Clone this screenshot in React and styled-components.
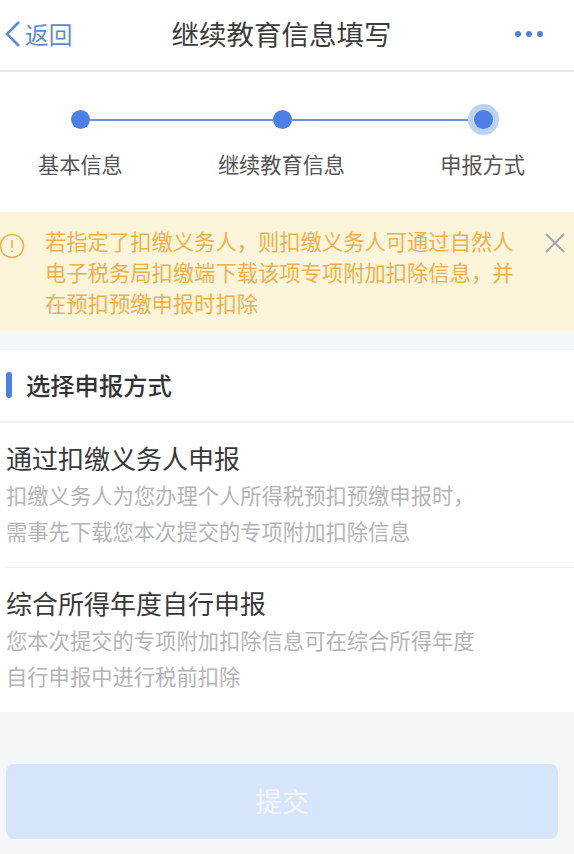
import React from "react";
import styled, { createGlobalStyle } from "styled-components";

const GlobalStyle = createGlobalStyle`
  html, body {
    margin: 0;
    padding: 0;
    background: #f4f6fa;
  }
  body {
    font-family: "Noto Sans CJK SC", "Liberation Sans", sans-serif;
  }
`;

const Page = styled.div`
  width: 574px;
  height: 854px;
  overflow: hidden;
  display: flex;
  flex-direction: column;
  background: #f4f6fa;
`;

const Header = styled.header`
  height: 70px;
  box-sizing: content-box;
  display: flex;
  align-items: center;
  justify-content: space-between;
  padding: 0 31px 0 4px;
  background: #fff;
  border-bottom: 2px solid #e9e9eb;
`;

const Back = styled.div`
  width: 136px;
  display: flex;
  align-items: center;
  gap: 3px;
  margin-bottom: 2px;
  color: #5b8bd8;
  font-size: 23.7px;
`;

const Title = styled.h1`
  margin: 0 0 4px;
  font-size: 27.5px;
  font-weight: 400;
  color: #3c3c3c;
`;

const More = styled.div`
  width: 120px;
  display: flex;
  justify-content: flex-end;
  gap: 5px;
  margin-bottom: 2px;
`;

const MoreDot = styled.span`
  width: 6px;
  height: 6px;
  border-radius: 50%;
  background: #4f7fdc;
`;

const Steps = styled.section`
  height: 140px;
  background: #fff;
  display: flex;
  flex-direction: column;
`;

const Track = styled.div`
  height: 37px;
  margin: 29px 81px 0 71px;
  display: flex;
  align-items: center;
`;

const Dot = styled.span`
  flex: none;
  width: 19px;
  height: 19px;
  border-radius: 50%;
  background: #4d7fe6;
  ${(p) => p.$active && "box-shadow: 0 0 0 6px #bcd2f2;"}
`;

const Line = styled.span`
  flex: 1;
  height: 2px;
  background: #6b94da;
`;

const Labels = styled.div`
  margin-top: 11px;
  padding: 0 49px 0 38px;
  display: flex;
  justify-content: space-between;
`;

const StepLabel = styled.span`
  font-size: 21.2px;
  line-height: 30px;
  color: #555;
`;

const Notice = styled.section`
  height: 119px;
  display: flex;
  align-items: flex-start;
  background: #fcf5d9;
  color: #eeb04e;
`;

const NoticeIcon = styled.svg`
  flex: none;
  width: 26px;
  height: 26px;
  margin-top: 21px;
`;

const NoticeText = styled.p`
  margin: 13px 0 0 19px;
  width: 472px;
  font-size: 21.3px;
  line-height: 31px;
`;

const CloseIcon = styled.svg`
  flex: none;
  width: 22px;
  height: 22px;
  margin: 20px 0 0 27px;
`;

const Card = styled.section`
  margin-top: 19px;
  background: #fff;
`;

const SectionHead = styled.div`
  height: 73px;
  box-sizing: border-box;
  display: flex;
  align-items: center;
  gap: 13px;
  padding: 0 0 2px 6px;
  border-bottom: 2px solid #efeff1;
`;

const Marker = styled.span`
  width: 6px;
  height: 26px;
  border-radius: 3px;
  background: #4d7fe6;
`;

const SectionTitle = styled.h2`
  margin: 0 0 0 1px;
  font-size: 24.3px;
  font-weight: 500;
  color: #333;
`;

const Option = styled.div`
  height: ${(p) => p.$height}px;
  margin-left: 6px;
  padding-top: 16px;
  box-sizing: border-box;
  ${(p) => p.$divided && "border-bottom: 1px solid #ececee;"}
`;

const OptionTitle = styled.div`
  font-size: 26px;
  line-height: 38px;
  color: #3a3a3a;
`;

const OptionText = styled.div`
  font-size: 21.3px;
  line-height: 36px;
  color: #b4b4b6;
`;

const Footer = styled.div`
  padding: 52px 16px 0 6px;
`;

const Submit = styled.button`
  width: 100%;
  height: 75px;
  padding: 0 0 3px;
  border: none;
  border-radius: 8px;
  background: #d6e5fa;
  color: #f2f6fc;
  font-family: inherit;
  font-size: 27px;
`;

export default function App() {
  return (
    <Page>
      <GlobalStyle />
      <Header>
        <Back>
          <svg width="18" height="28" viewBox="0 0 18 28" fill="none">
            <path d="M15 2 3 14l12 12" stroke="#5b8bd8" strokeWidth="2.6" />
          </svg>
          返回
        </Back>
        <Title>继续教育信息填写</Title>
        <More>
          <MoreDot />
          <MoreDot />
          <MoreDot />
        </More>
      </Header>
      <Steps>
        <Track>
          <Dot />
          <Line />
          <Dot />
          <Line />
          <Dot $active />
        </Track>
        <Labels>
          <StepLabel>基本信息</StepLabel>
          <StepLabel>继续教育信息</StepLabel>
          <StepLabel>申报方式</StepLabel>
        </Labels>
      </Steps>
      <Notice>
        <NoticeIcon viewBox="0 0 26 26" fill="none">
          <circle cx="12" cy="13" r="11.5" stroke="#eeb04e" strokeWidth="1.6" />
          <path d="M12 7v8M12 17.5v1.6" stroke="#eeb04e" strokeWidth="1.6" />
        </NoticeIcon>
        <NoticeText>
          若指定了扣缴义务人，则扣缴义务人可通过自然人电子税务局扣缴端下载该项专项附加扣除信息，并在预扣预缴申报时扣除
        </NoticeText>
        <CloseIcon viewBox="0 0 22 22" fill="none">
          <path d="M2 2l18 18M20 2 2 20" stroke="#a4a7ad" strokeWidth="2" />
        </CloseIcon>
      </Notice>
      <Card>
        <SectionHead>
          <Marker />
          <SectionTitle>选择申报方式</SectionTitle>
        </SectionHead>
        <Option $height={145} $divided>
          <OptionTitle>通过扣缴义务人申报</OptionTitle>
          <OptionText>
            扣缴义务人为您办理个人所得税预扣预缴申报时，
            <br />
            需事先下载您本次提交的专项附加扣除信息
          </OptionText>
        </Option>
        <Option $height={144}>
          <OptionTitle>综合所得年度自行申报</OptionTitle>
          <OptionText>
            您本次提交的专项附加扣除信息可在综合所得年度
            <br />
            自行申报中进行税前扣除
          </OptionText>
        </Option>
      </Card>
      <Footer>
        <Submit>提交</Submit>
      </Footer>
    </Page>
  );
}
